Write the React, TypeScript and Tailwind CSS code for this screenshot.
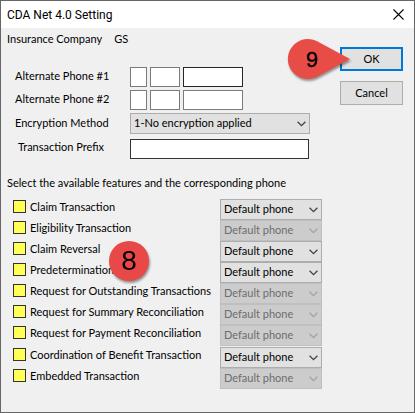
import { clsx } from "clsx";

type Feature = {
  name: string;
  enabled: boolean;
};

const features: Feature[] = [
  { name: "Claim Transaction", enabled: true },
  { name: "Eligibility Transaction", enabled: false },
  { name: "Claim Reversal", enabled: true },
  { name: "Predetermination", enabled: true },
  { name: "Request for Outstanding Transactions", enabled: false },
  { name: "Request for Summary Reconciliation", enabled: false },
  { name: "Request for Payment Reconciliation", enabled: false },
  { name: "Coordination of Benefit Transaction", enabled: true },
  { name: "Embedded Transaction", enabled: false }
];

const phones = [1, 2];

type DropdownProps = {
  id: string;
  value: string;
  label?: string;
  disabled?: boolean;
};

function Dropdown({ id, value, label, disabled = false }: DropdownProps) {
  return (
    <div className="relative">
      <select
        id={id}
        aria-label={label}
        disabled={disabled}
        className={clsx(
          "block h-[21px] w-full appearance-none border pr-5 pl-[3px] opacity-100 outline-none",
          disabled
            ? "border-[#bfbfbf] bg-[#cccccc] text-[#6d6d6d]"
            : "border-[#adadad] bg-[#e1e1e1] text-black"
        )}
      >
        <option>{value}</option>
      </select>
      <svg
        viewBox="0 0 9 6"
        className={clsx(
          "pointer-events-none absolute top-2 right-1 h-[6px] w-[9px]",
          disabled ? "text-[#a3a3a3]" : "text-[#444444]"
        )}
        fill="none"
        stroke="currentColor"
        strokeWidth="1.3"
      >
        <path d="M0.6 0.7 4.5 4.6 8.4 0.7" />
      </svg>
    </div>
  );
}

function TitleBar() {
  return (
    <header className="flex h-[27px] items-center justify-between bg-white pr-[10px] pl-[6px]">
      <h1 className="font-[Roboto,sans-serif] text-[12px] leading-4">CDA Net 4.0 Setting</h1>
      <button type="button" aria-label="Close">
        <svg viewBox="0 0 11 11" className="size-[11px]" stroke="black" strokeWidth="1.1">
          <path d="M0.5 0.5 10.5 10.5M10.5 0.5 0.5 10.5" />
        </svg>
      </button>
    </header>
  );
}

function ConnectionFields() {
  const field = "h-5 border bg-white px-1 outline-none";
  const caption = "w-[92px] text-center leading-4 whitespace-nowrap";

  return (
    <div className="mt-5 w-[303px] pl-2">
      <div className="grid gap-[3px]">
        {phones.map((n) => (
          <div key={n} className="flex gap-[23px]">
            <label htmlFor={`area-${n}`} className={clsx(caption, "pt-px")}>
              Alternate Phone #{n}
            </label>
            <div className="flex gap-[3px]">
              <input id={`area-${n}`} type="text" className={clsx(field, "w-[17px] border-[#7a7a7a]")} />
              <input
                type="text"
                aria-label={`Phone ${n} exchange`}
                className={clsx(field, "w-[30px] border-[#7a7a7a]")}
              />
              <input
                type="text"
                aria-label={`Phone ${n} number`}
                className={clsx(field, "w-[60px]", n === 1 ? "border-[#262626]" : "border-[#7a7a7a]")}
              />
            </div>
          </div>
        ))}
        <div className="flex gap-[23px]">
          <label htmlFor="encryption" className={clsx(caption, "pt-[2px]")}>
            Encryption Method
          </label>
          <div className="flex-1">
            <Dropdown id="encryption" value="1-No encryption applied" />
          </div>
        </div>
      </div>
      <div className="mt-[5px] flex gap-[23px] pr-px">
        <label htmlFor="prefix" className={caption}>
          Transaction Prefix
        </label>
        <input id="prefix" type="text" className={clsx(field, "min-w-0 flex-1 border-[#333333]")} />
      </div>
    </div>
  );
}

function FeatureRow({ name, enabled }: Feature) {
  const id = name.toLowerCase().replaceAll(" ", "-");

  return (
    <li className="flex nth-8:mt-px">
      <div className="flex w-[207px] items-start gap-1">
        <input
          id={id}
          type="checkbox"
          className="mt-px size-[13px] appearance-none border border-[#333333] bg-[#ffff55]"
        />
        <label htmlFor={id} className="leading-4 whitespace-nowrap">
          {name}
        </label>
      </div>
      <div className="w-[102px]">
        <Dropdown id={`${id}-phone`} value="Default phone" label={`${name} phone`} disabled={!enabled} />
      </div>
    </li>
  );
}

export default function App() {
  return (
    <main className="flex min-h-screen flex-col border border-[#666666] bg-[#f0f0f0] font-[Lato,Arial,sans-serif] text-[11px] text-black">
      <TitleBar />
      <form className="relative flex justify-between pt-[3px] pr-[11px] pl-[6px]">
        <div>
          <p className="flex gap-3 leading-4">
            <span>Insurance Company</span>
            <span>GS</span>
          </p>
          <ConnectionFields />
          <fieldset className="mt-4">
            <legend className="leading-4">
              Select the available features and the corresponding phone
            </legend>
            <ul className="mt-2 pl-[6px]">
              {features.map((feature) => (
                <FeatureRow key={feature.name} {...feature} />
              ))}
            </ul>
          </fieldset>
        </div>

        <div className="mt-4 flex w-[63px] flex-col gap-[10px]">
          <button type="button" className="h-6 border-2 border-[#0078d7] bg-[#e1e1e1]">
            OK
          </button>
          <button type="button" className="h-6 border border-[#adadad] bg-[#e1e1e1]">
            Cancel
          </button>
        </div>

        {/* step markers pinned over the dialog */}
        <svg
          viewBox="0 0 62 40"
          className="absolute top-[11px] right-16 h-10 w-[62px] overflow-visible drop-shadow-[1px_2px_1px_rgba(0,0,0,0.4)]"
        >
          <path d="M62 20 29 37.8A20 20 0 1 1 29 2.2Z" fill="#e84c46" />
          <text
            x="24"
            y="28"
            textAnchor="middle"
            className="font-['Liberation_Sans',Arial,sans-serif] text-[22px]"
            stroke="black"
            strokeWidth="0.4"
          >
            9
          </text>
        </svg>
        <div className="absolute top-[213px] left-[108px] flex size-10 items-center justify-center rounded-full bg-[#e84848] font-['Liberation_Sans',Arial,sans-serif] text-[28px] drop-shadow-[1px_2px_1px_rgba(0,0,0,0.4)]">
          8
        </div>
      </form>
    </main>
  );
}
